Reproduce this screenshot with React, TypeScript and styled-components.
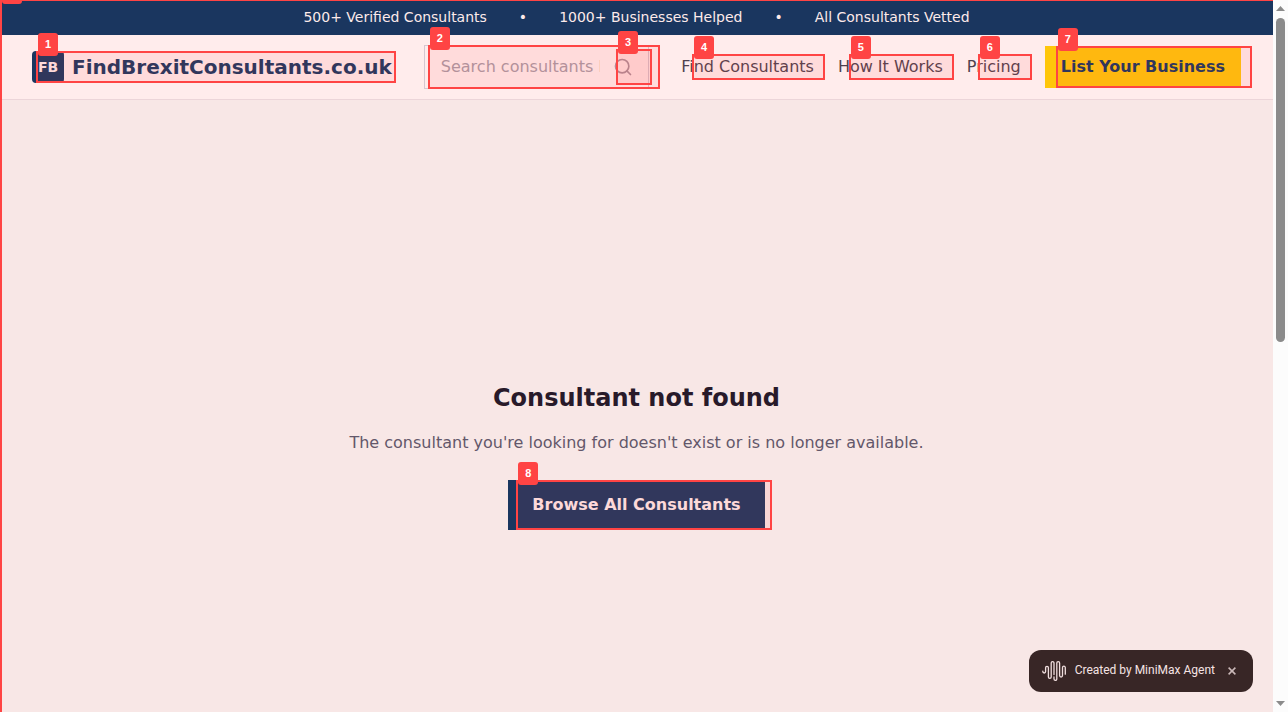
import React from 'react';
import styled, { createGlobalStyle } from 'styled-components';
import { Search } from 'lucide-react';

const GlobalStyle = createGlobalStyle`
  *, *::before, *::after { box-sizing: border-box; }
  body {
    margin: 0;
    font-family: "DejaVu Sans", sans-serif;
    font-size: 16px;
    line-height: 26px;
    background: #f8e7e6;
  }
`;

const Window = styled.div`
  display: flex;
  height: 100vh;
  overflow: hidden;
`;

const Page = styled.div`
  position: relative;
  flex: 1;
  min-width: 0;
  overflow: hidden;
`;

const TopBar = styled.div`
  display: flex;
  justify-content: center;
  gap: 32px;
  padding: 8px 16px;
  background: #1a365f;
  color: #fdeaea;
  font-size: 14px;
  line-height: 19px;
`;

const Header = styled.header`
  display: flex;
  align-items: center;
  gap: 32px;
  height: 65px;
  padding: 0 32px;
  background: #ffecec;
  border-bottom: 1px solid #ecd5d9;
`;

const Logo = styled.a`
  position: relative;
  display: flex;
  align-items: center;
  gap: 8px;
  color: #1a365f;
  font-size: 20px;
  font-weight: 700;
  line-height: 32px;
  white-space: nowrap;
  text-decoration: none;
`;

const LogoBadge = styled.span`
  width: 32px;
  height: 32px;
  border-radius: 4px;
  background: #1a365f;
  color: #fdeaea;
  font-size: 14px;
  text-align: center;
`;

const SearchForm = styled.form`
  position: relative;
  flex: 1;
  min-width: 0;
  display: flex;
`;

const SearchInput = styled.input`
  width: 100%;
  height: 44px;
  padding: 0 48px 2px 16px;
  border: 1px solid #d6c6d0;
  background: transparent;
  font: inherit;
  color: #4a3d4b;
  outline: none;
  &::placeholder { color: #ab9aa5; opacity: 1; }
`;

const SearchButton = styled.button`
  position: absolute;
  top: 4px;
  right: 8px;
  width: 36px;
  height: 36px;
  padding: 8px;
  border: 0;
  background: transparent;
  color: #ab929e;
  svg { display: block; }
`;

const Nav = styled.nav`
  display: flex;
  align-items: center;
  gap: 24px;
  white-space: nowrap;
`;

const NavLink = styled.a`
  position: relative;
  color: #4f414e;
  text-decoration: none;
`;

const ActionLink = styled.a<{ $primary?: boolean }>`
  position: relative;
  display: inline-block;
  padding: ${(p) => (p.$primary ? '12px 24px' : '8px 16px')};
  background: ${(p) => (p.$primary ? '#1a365f' : '#ffc60a')};
  color: ${(p) => (p.$primary ? '#fdeaea' : '#1a365f')};
  font-weight: 700;
  text-decoration: none;
`;

const Main = styled.main`
  display: flex;
  flex-direction: column;
  align-items: center;
  justify-content: center;
  min-height: 100vh;
`;

const Title = styled.h1`
  margin: 0 0 16px;
  color: #281a2a;
  font-size: 24px;
  line-height: 32px;
`;

const Message = styled.p`
  margin: 0 0 24px;
  color: #63576a;
`;

const Outline = styled.span<{ $start: number; $shift: number }>`
  position: absolute;
  z-index: 1;
  top: 0;
  bottom: 0;
  left: ${(p) => p.$start}px;
  right: ${(p) => -p.$shift}px;
  border: 2px solid #ff4444;
  background: rgba(255, 68, 68, 0.1);
  pointer-events: none;
`;

const PageOutline = styled.div`
  position: absolute;
  z-index: 2;
  inset: 0;
  border: solid #ff4444;
  border-width: 1px 0 0 2px;
  pointer-events: none;
`;

const Tag = styled.span`
  position: absolute;
  top: -20px;
  left: 0;
  width: 20px;
  height: 23px;
  border-radius: 3px;
  background: #ff4444;
  color: #fff;
  font: 700 11px/23px "Liberation Sans", sans-serif;
  text-align: center;
`;

const Credit = styled.div`
  position: absolute;
  right: 20px;
  bottom: 20px;
  display: flex;
  align-items: center;
  height: 42px;
  padding: 0 12px;
  border-radius: 12px;
  background: #382626;
  color: #f5e3e3;
  font: 400 12px/20px Roboto, sans-serif;
  white-space: nowrap;
`;

const CreditText = styled.span`
  margin: 0 8px;
  padding-bottom: 2px;
`;

const CloseButton = styled.button`
  display: flex;
  padding: 4px;
  border: 0;
  background: transparent;
  color: #cbb9b9;
`;

const ScrollBar = styled.div`
  display: flex;
  flex-direction: column;
  align-items: center;
  width: 15px;
  padding: 6px 0;
  background: #fcfcfc;
`;

const Track = styled.div`
  flex: 1;
  width: 9px;
  margin: 7px 0;
`;

const Thumb = styled.div`
  height: 48%;
  border-radius: 5px;
  background: #8b8b8b;
`;

function Mark({ n, start = 11, shift = 11 }: { n: number; start?: number; shift?: number }) {
  return (
    <Outline $start={start} $shift={shift}>
      <Tag>{n}</Tag>
    </Outline>
  );
}

function Arrow({ down }: { down?: boolean }) {
  return (
    <svg width="9" height="5" viewBox="0 0 9 5" fill="#8b8b8b" aria-hidden="true">
      <path d={down ? 'M0 0h9L4.5 5z' : 'M0 5h9L4.5 0z'} />
    </svg>
  );
}

function WaveLogo() {
  return (
    <svg width="26" height="24" viewBox="0 0 26 24" fill="none" stroke="#f0dede" strokeWidth="1.3" strokeLinecap="round" aria-hidden="true">
      <path d="M1.8 12.2v.4a1.4 1.4 0 0 0 2.8 0V8.7a1.4 1.4 0 0 1 2.8 0v9.2a1.4 1.4 0 0 0 2.8 0V4a1.4 1.4 0 0 1 2.8 0v11.5" />
      <path d="M13 18v2a1.4 1.4 0 0 0 2.8 0V4a1.4 1.4 0 0 1 2.8 0v12.6a1.4 1.4 0 0 0 2.9 0V8.6a1.4 1.4 0 0 1 2.8 0v6.6" />
    </svg>
  );
}

export default function App() {
  return (
    <>
      <GlobalStyle />
      <Window>
        <Page>
          <TopBar>
            <span>500+ Verified Consultants</span>
            <span>•</span>
            <span>1000+ Businesses Helped</span>
            <span>•</span>
            <span>All Consultants Vetted</span>
          </TopBar>
          <Header>
            <Logo href="#">
              <LogoBadge>FB</LogoBadge>
              <span>FindBrexitConsultants.co.uk</span>
              <Mark n={1} start={4} shift={4} />
            </Logo>
            <SearchForm>
              <SearchInput type="text" aria-label="Search consultants" placeholder="Search consultants by name" />
              <Mark n={2} start={4} />
              <SearchButton type="button" aria-label="Search">
                <Search size={20} />
                <Mark n={3} />
              </SearchButton>
            </SearchForm>
            <Nav>
              <NavLink href="#">Find Consultants<Mark n={4} /></NavLink>
              <NavLink href="#">How It Works<Mark n={5} /></NavLink>
              <NavLink href="#">Pricing<Mark n={6} /></NavLink>
              <ActionLink href="#">List Your Business<Mark n={7} /></ActionLink>
            </Nav>
          </Header>
          <Main>
            <Title>Consultant not found</Title>
            <Message>The consultant you're looking for doesn't exist or is no longer available.</Message>
            <ActionLink href="#" $primary>
              Browse All Consultants
              <Mark n={8} start={8} shift={7} />
            </ActionLink>
          </Main>
          <Credit>
            <WaveLogo />
            <CreditText>Created by MiniMax Agent</CreditText>
            <CloseButton type="button" aria-label="Close">
              <svg width="10" height="10" viewBox="0 0 10 10" fill="none" stroke="currentColor" strokeWidth="1.5" aria-hidden="true">
                <path d="M1.6 1.6l6.8 6.8M8.4 1.6l-6.8 6.8" />
              </svg>
            </CloseButton>
          </Credit>
          <PageOutline>
            <Tag />
          </PageOutline>
        </Page>
        <ScrollBar>
          <Arrow />
          <Track><Thumb /></Track>
          <Arrow down />
        </ScrollBar>
      </Window>
    </>
  );
}
